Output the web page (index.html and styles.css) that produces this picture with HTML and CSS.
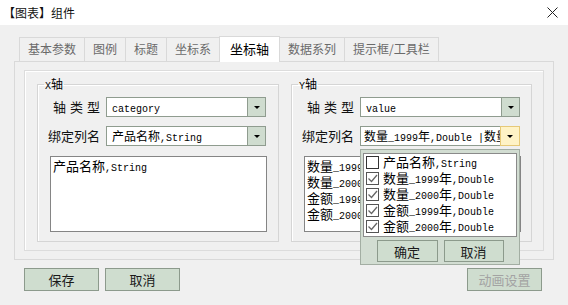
FILE: index.html
```html
<!DOCTYPE html>
<html lang="zh-CN">
<head>
    <meta charset="UTF-8">
    <meta name="viewport" content="width=device-width, initial-scale=1.0">
    <title>【图表】组件</title>
    <link rel="stylesheet" href="styles.css">
</head>
<body>
    <div class="titlebar">
        <span class="title">【图表】组件</span>
        <svg class="close" width="11" height="11" viewBox="0 0 11 11">
            <path d="M0.5 0.5L10.5 10.5M10.5 0.5L0.5 10.5" stroke="#222" stroke-width="1" fill="none"/>
        </svg>
    </div>

    <div class="tabs">
        <div class="tab">基本参数</div>
        <div class="tab">图例</div>
        <div class="tab">标题</div>
        <div class="tab">坐标系</div>
        <div class="tab active">坐标轴</div>
        <div class="tab">数据系列</div>
        <div class="tab">提示框/工具栏</div>
    </div>

    <div class="panel">
        <div class="inner">
            <!-- X axis -->
            <fieldset class="group">
                <legend><span class="en">X</span>轴</legend>
                <div class="row">
                    <label class="lbl spaced">轴类型</label>
                    <div class="combo">
                        <div class="combo-text"><span class="en">category</span></div>
                        <div class="combo-btn"><i class="arrow"></i></div>
                    </div>
                </div>
                <div class="row">
                    <label class="lbl">绑定列名</label>
                    <div class="combo">
                        <div class="combo-text">产品名称<span class="en">,String</span></div>
                        <div class="combo-btn"><i class="arrow"></i></div>
                    </div>
                </div>
                <div class="listbox">
                    <div class="line">产品名称<span class="en">,String</span></div>
                </div>
            </fieldset>

            <!-- Y axis -->
            <fieldset class="group narrow">
                <legend><span class="en">Y</span>轴</legend>
                <div class="row">
                    <label class="lbl spaced">轴类型</label>
                    <div class="combo">
                        <div class="combo-text"><span class="en">value</span></div>
                        <div class="combo-btn"><i class="arrow"></i></div>
                    </div>
                </div>
                <div class="row">
                    <label class="lbl">绑定列名</label>
                    <div class="combo">
                        <div class="combo-text tight">数量<span class="en">_1999</span>年<span class="en">,Double |</span>数量<span class="en">_2000</span>年<span class="en">,Double</span></div>
                        <div class="combo-btn hover"><i class="arrow"></i></div>

                        <div class="popup">
                            <div class="checklist">
                                <div class="item"><span class="box"></span><span class="txt">产品名称<span class="en">,String</span></span></div>
                                <div class="item"><span class="box checked"><svg width="11" height="11" viewBox="0 0 11 11"><path d="M1.5 5.5L4.5 8.5L10 2" stroke="#666" stroke-width="1.3" fill="none"/></svg></span><span class="txt">数量<span class="en">_1999</span>年<span class="en">,Double</span></span></div>
                                <div class="item"><span class="box checked"><svg width="11" height="11" viewBox="0 0 11 11"><path d="M1.5 5.5L4.5 8.5L10 2" stroke="#666" stroke-width="1.3" fill="none"/></svg></span><span class="txt">数量<span class="en">_2000</span>年<span class="en">,Double</span></span></div>
                                <div class="item"><span class="box checked"><svg width="11" height="11" viewBox="0 0 11 11"><path d="M1.5 5.5L4.5 8.5L10 2" stroke="#666" stroke-width="1.3" fill="none"/></svg></span><span class="txt">金额<span class="en">_1999</span>年<span class="en">,Double</span></span></div>
                                <div class="item"><span class="box checked"><svg width="11" height="11" viewBox="0 0 11 11"><path d="M1.5 5.5L4.5 8.5L10 2" stroke="#666" stroke-width="1.3" fill="none"/></svg></span><span class="txt">金额<span class="en">_2000</span>年<span class="en">,Double</span></span></div>
                            </div>
                            <div class="pop-btns">
                                <button class="btn small">确定</button>
                                <button class="btn small">取消</button>
                            </div>
                        </div>
                    </div>
                </div>
                <div class="listbox">
                    <div class="line">数量<span class="en">_1999</span>年<span class="en">,Double</span></div>
                    <div class="line">数量<span class="en">_2000</span>年<span class="en">,Double</span></div>
                    <div class="line">金额<span class="en">_1999</span>年<span class="en">,Double</span></div>
                    <div class="line">金额<span class="en">_2000</span>年<span class="en">,Double</span></div>
                </div>
            </fieldset>
        </div>
    </div>

    <div class="footer">
        <button class="btn">保存</button>
        <button class="btn">取消</button>
        <button class="btn push" disabled>动画设置</button>
    </div>
</body>
</html>
```

FILE: styles.css
```css
* {
    box-sizing: border-box;
}

body {
    margin: 0;
    width: 568px;
    height: 305px;
    overflow: hidden;
    background-color: #f0f0f0;
    font-family: "Noto Sans CJK SC", sans-serif;
    font-size: 12px;
    line-height: 16px;
    color: #000;
}

.en {
    font-family: "Liberation Mono", monospace;
    font-size: 10px;
}

/* title bar */
.titlebar {
    height: 25px;
    background-color: #fff;
    display: flex;
    align-items: center;
    justify-content: space-between;
    padding: 0 10px 0 3px;
}

.title {
    font-size: 12px;
    color: #111;
}

/* tabs */
.tabs {
    height: 36px;
    padding: 12px 0 0 19px;
    display: flex;
    align-items: flex-end;
    position: relative;
    z-index: 1;
}

.tab {
    height: 24px;
    padding: 0 8px;
    border: 1px solid #d9d9d9;
    border-bottom: none;
    margin-right: -1px;
    line-height: 22px;
    color: #6a6a6a;
    white-space: nowrap;
}

.tab.active {
    height: 26px;
    margin-bottom: -1px;
    padding: 0 10px;
    background-color: #fff;
    color: #000;
    line-height: 24px;
    font-size: 13px;
    position: relative;
}

/* panel */
.panel {
    margin-left: 14px;
    width: 540px;
    height: 199px;
    border: 1px solid #d9d9d9;
    padding: 8px 0 0 9px;
}

.inner {
    width: 520px;
    height: 181px;
    border: 1px solid #dcdcdc;
    box-shadow: inset 1px 1px 0 #fff;
    display: flex;
    gap: 12px;
    padding: 6px 0 0 12px;
}

.group {
    margin: 0;
    width: 242px;
    height: 165px;
    min-width: 0;
    padding: 0 11px 0 9px;
    border: 1px solid #d5d5d5;
    box-shadow: 1px 1px 0 #fff inset;
}

.group.narrow {
    width: 241px;
}

.group legend {
    height: 14px;
    margin-left: -3px;
    padding: 0 1px;
    line-height: 14px;
    font-size: 12px;
    overflow: visible;
}

.row {
    display: flex;
    align-items: center;
    height: 20px;
    margin-top: 6px;
}

.row + .row {
    margin-top: 9px;
}

.lbl {
    width: 59px;
    padding-right: 6px;
    text-align: right;
    font-size: 13px;
    white-space: nowrap;
    color: #111;
}

.lbl.spaced {
    letter-spacing: 4px;
    padding-right: 2px;
}

/* combo box */
.combo {
    width: 160px;
    height: 20px;
    display: flex;
    border: 1px solid #8f9c8f;
    background-color: #fff;
    position: relative;
}

.combo-text {
    flex: 1;
    min-width: 0;
    height: 18px;
    padding-left: 5px;
    line-height: 18px;
    white-space: nowrap;
    overflow: hidden;
}

.combo-text.tight {
    padding-left: 3px;
}

.combo-btn {
    width: 18px;
    border-left: 1px solid #8f9c8f;
    background-color: #cfdccf;
    display: flex;
    align-items: center;
    justify-content: center;
}

.combo-btn.hover {
    width: 20px;
    margin: -1px -1px -1px 0;
    background-color: #fff3c6;
    border: 1px solid #e6c978;
}

.arrow {
    width: 0;
    height: 0;
    border-left: 3px solid transparent;
    border-right: 3px solid transparent;
    border-top: 3px solid #000;
}

/* list box */
.listbox {
    width: 217px;
    height: 76px;
    margin: 10px 0 0 3px;
    border: 1px solid #858585;
    background-color: #fff;
    padding: 1px 2px;
    font-size: 13px;
    line-height: 16px;
    overflow: hidden;
}

.line {
    height: 16px;
    white-space: nowrap;
}

/* drop-down check list */
.popup {
    position: absolute;
    z-index: 5;
    left: -1px;
    top: 22px;
    width: 160px;
    height: 116px;
    padding: 3px 2px;
    background-color: #d2ddd2;
    border: 1px solid #a3aea3;
}

.checklist {
    height: 84px;
    background-color: #fff;
    border: 1px solid #8a8a8a;
    padding: 0 2px;
}

.item {
    display: flex;
    align-items: center;
    height: 16px;
    font-size: 13px;
    white-space: nowrap;
}

.txt {
    height: 16px;
    line-height: 16px;
}

.box {
    width: 13px;
    height: 13px;
    flex: none;
    margin-right: 4px;
    border: 1px solid #333;
    background-color: #fff;
    display: flex;
    align-items: center;
    justify-content: center;
}

.box.checked {
    border-color: #555;
}

.pop-btns {
    display: flex;
    justify-content: center;
    gap: 6px;
    margin-top: 3px;
}

/* buttons */
.btn {
    width: 75px;
    height: 23px;
    padding: 0;
    border: 1px solid #8c9a8c;
    background-color: #cfddcf;
    font-family: "Noto Sans CJK SC", sans-serif;
    font-size: 13px;
    color: #1a1a1a;
}

.btn.small {
    width: 61px;
    height: 22px;
}

.btn.small + .btn.small {
    width: 60px;
}

.btn:disabled {
    color: #a3a3a3;
}

.footer {
    display: flex;
    gap: 6px;
    padding: 8px 26px 0 24px;
}

.push {
    margin-left: auto;
}
```
